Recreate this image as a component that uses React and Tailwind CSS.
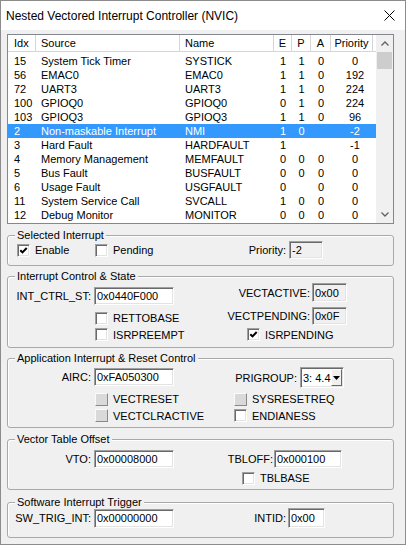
import React from 'react';

const rows = [
  ['15', 'System Tick Timer', 'SYSTICK', '1', '1', '0', '0'],
  ['56', 'EMAC0', 'EMAC0', '1', '1', '0', '192'],
  ['72', 'UART3', 'UART3', '1', '1', '0', '224'],
  ['100', 'GPIOQ0', 'GPIOQ0', '0', '1', '0', '224'],
  ['103', 'GPIOQ3', 'GPIOQ3', '1', '1', '0', '96'],
  ['2', 'Non-maskable Interrupt', 'NMI', '1', '0', '', '-2'],
  ['3', 'Hard Fault', 'HARDFAULT', '1', '', '', '-1'],
  ['4', 'Memory Management', 'MEMFAULT', '0', '0', '0', '0'],
  ['5', 'Bus Fault', 'BUSFAULT', '0', '0', '0', '0'],
  ['6', 'Usage Fault', 'USGFAULT', '0', '', '0', '0'],
  ['11', 'System Service Call', 'SVCALL', '1', '0', '0', '0'],
  ['12', 'Debug Monitor', 'MONITOR', '0', '0', '0', '0'],
];

// column widths + alignment, same for header and rows
const cols = [
  { label: 'Idx', cls: 'w-[28px] pl-[6px]' },
  { label: 'Source', cls: 'w-[144px] pl-[5px]' },
  { label: 'Name', cls: 'w-[94px] pl-[5px]' },
  { label: 'E', cls: 'w-[18px] text-center' },
  { label: 'P', cls: 'w-[19px] text-center' },
  { label: 'A', cls: 'w-[20px] text-center' },
  { label: 'Priority', cls: 'w-[42px] text-center' },
];

const sunken =
  'border border-t-[#a0a0a0] border-l-[#a0a0a0] border-b-white border-r-white shadow-[inset_1px_1px_0_#696969,inset_-1px_-1px_0_#e3e3e3]';

function Box({ checked, disabled }) {
  if (disabled) {
    return (
      <span className="w-[13px] h-[13px] shrink-0 bg-[#d9d9d9] border border-t-[#fafafa] border-l-[#fafafa] border-b-[#8a8a8a] border-r-[#8a8a8a]" />
    );
  }
  return (
    <span className={`w-[13px] h-[13px] shrink-0 flex items-center justify-center bg-white ${sunken}`}>
      {checked && (
        <svg width="9" height="9" viewBox="0 0 9 9">
          <path d="M1.3 4.2 L3.5 6.4 L7.7 2" fill="none" stroke="#000" strokeWidth="2" />
        </svg>
      )}
    </span>
  );
}

function Check({ label, checked, disabled, className = '' }) {
  return (
    <div className={`flex items-center ${className}`}>
      <Box checked={checked} disabled={disabled} />
      <span className="ml-[5px] whitespace-nowrap">{label}</span>
    </div>
  );
}

function Edit({ value, w, h = 'h-[18px]', ro }) {
  return (
    <div className={`${w} ${h} ${ro ? 'bg-[#f0f0f0]' : 'bg-white'} flex items-center pl-[2px] whitespace-nowrap ${sunken}`}>
      {value}
    </div>
  );
}

function Group({ title, className = '', children }) {
  return (
    <fieldset className={`border border-[#a9a9a9] rounded-[3px] shadow-[inset_1px_1px_0_#fff] ${className}`}>
      <legend className="ml-[7px] px-[2px] leading-[12px] bg-[#f0f0f0]">{title}</legend>
      {children}
    </fieldset>
  );
}

function Chevron({ down }) {
  return (
    <svg width="8" height="5" viewBox="0 0 8 5">
      <polyline
        points={down ? '0.5,0.5 4,4 7.5,0.5' : '0.5,4.5 4,1 7.5,4.5'}
        fill="none"
        stroke="#606060"
        strokeWidth="1.3"
      />
    </svg>
  );
}

function List() {
  return (
    <div className="mt-[4px] h-[190px] border border-[#828790] bg-white flex">
      <div className="flex-1 flex flex-col">
        <div className="h-[17px] flex border-b border-[#d5d5d5]">
          {cols.map((c) => (
            <div key={c.label} className={`${c.cls} h-full leading-[16px] border-r border-[#d5d5d5]`}>
              {c.label}
            </div>
          ))}
        </div>
        <div className="pt-[2px]">
          {rows.map((r) => {
            const sel = r[0] === '2';
            return (
              <div key={r[0]} className={`h-[14px] flex leading-[14px] ${sel ? 'bg-[#3399ff] text-white' : ''}`}>
                {r.map((v, i) => (
                  <div key={i} className={`${cols[i].cls} whitespace-nowrap overflow-hidden ${i === 6 ? 'pl-[6px]' : ''}`}>
                    {v}
                  </div>
                ))}
              </div>
            );
          })}
        </div>
      </div>
      <div className="w-[17px] bg-[#f0f0f0] flex flex-col">
        <div className="h-[17px] flex items-center justify-center">
          <Chevron />
        </div>
        <div className="mx-[1px] h-[17px] bg-[#cdcdcd]" />
        <div className="flex-1" />
        <div className="h-[17px] flex items-center justify-center">
          <Chevron down />
        </div>
      </div>
    </div>
  );
}

export default function App() {
  return (
    <div className="w-[406px] h-[545px] border border-[#8c8c8c] bg-[#f0f0f0] text-black text-[11px] leading-[14px] font-['Liberation_Sans',Arial,sans-serif] overflow-hidden">
      <div className="h-[29px] bg-white flex items-center justify-between pl-[5px] pr-[10px]">
        <span className="text-[12px]">Nested Vectored Interrupt Controller (NVIC)</span>
        <svg width="11" height="11" viewBox="0 0 11 11">
          <path d="M0.5 0.5 L10.5 10.5 M10.5 0.5 L0.5 10.5" stroke="#000" strokeWidth="1" />
        </svg>
      </div>

      <div className="pl-[6px] pr-[11px]">
        <List />

        <Group title="Selected Interrupt" className="mt-[5px] pb-[6px]">
          <div className="flex items-center h-[18px] pl-[9px]">
            <Check checked label="Enable" className="w-[78px]" />
            <Check label="Pending" className="w-[120px]" />
            <span className="w-[74px] text-right pr-[3px]">Priority:</span>
            <Edit value="-2" w="w-[34px]" ro />
          </div>
        </Group>

        <Group title="Interrupt Control & State" className="mt-[4px] pb-[4px]">
          <div className="flex">
            <div className="w-[192px] flex flex-col">
              <div className="flex items-center mt-[5px] h-[18px]">
                <span className="w-[86px] text-right pr-[3px]">INT_CTRL_ST:</span>
                <Edit value="0x0440F000" w="w-[80px]" />
              </div>
              <Check label="RETTOBASE" className="ml-[87px] mt-[5px] h-[16px]" />
              <Check label="ISRPREEMPT" className="ml-[87px] h-[17px]" />
            </div>
            <div className="flex-1 flex flex-col">
              <div className="flex items-center mt-[1px] h-[19px]">
                <span className="w-[112px] text-right pr-[2px]">VECTACTIVE:</span>
                <Edit value="0x00" w="w-[35px]" h="h-[19px]" ro />
              </div>
              <div className="flex items-center mt-[5px] h-[18px]">
                <span className="w-[112px] text-right pr-[2px]">VECTPENDING:</span>
                <Edit value="0x0F" w="w-[35px]" ro />
              </div>
              <Check checked label="ISRPENDING" className="ml-[47px] mt-[1px] h-[17px]" />
            </div>
          </div>
        </Group>

        <Group title="Application Interrupt & Reset Control" className="mt-[4px] pb-[3px]">
          <div className="flex">
            <div className="w-[192px] flex flex-col">
              <div className="flex items-center mt-[4px] h-[18px]">
                <span className="w-[86px] text-right pr-[3px]">AIRC:</span>
                <Edit value="0xFA050300" w="w-[80px]" />
              </div>
              <Check disabled label="VECTRESET" className="ml-[87px] mt-[5px] h-[16px]" />
              <Check disabled label="VECTCLRACTIVE" className="ml-[87px] h-[17px]" />
            </div>
            <div className="flex-1 flex flex-col">
              <div className="flex items-center mt-[3px] h-[21px]">
                <span className="w-[100px] text-right pr-[3px]">PRIGROUP:</span>
                <div className={`w-[44px] h-[21px] bg-white flex items-center ${sunken}`}>
                  <span className="flex-1 pl-[2px] whitespace-nowrap">3: 4.4</span>
                  <span className="w-[15px] h-[17px] mr-[1px] bg-[#f0f0f0] flex items-center justify-center border border-t-white border-l-white border-b-[#696969] border-r-[#696969]">
                    <svg width="7" height="4" viewBox="0 0 7 4">
                      <path d="M0 0 H7 L3.5 4 Z" fill="#000" />
                    </svg>
                  </span>
                </div>
              </div>
              <Check disabled label="SYSRESETREQ" className="ml-[34px] mt-[3px] h-[16px]" />
              <Check label="ENDIANESS" className="ml-[34px] h-[17px]" />
            </div>
          </div>
        </Group>

        <Group title="Vector Table Offset" className="mt-[5px] pb-[3px]">
          <div className="flex">
            <div className="w-[192px] flex flex-col">
              <div className="flex items-center mt-[5px] h-[18px]">
                <span className="w-[86px] text-right pr-[3px]">VTO:</span>
                <Edit value="0x00008000" w="w-[80px]" />
              </div>
            </div>
            <div className="flex-1 flex flex-col">
              <div className="flex items-center mt-[5px] h-[18px]">
                <span className="w-[74px] text-right pr-[1px]">TBLOFF:</span>
                <Edit value="0x000100" w="w-[68px]" />
              </div>
              <Check label="TBLBASE" className="ml-[42px] mt-[2px] h-[16px]" />
            </div>
          </div>
        </Group>

        <Group title="Software Interrupt Trigger" className="mt-[6px] pb-[9px]">
          <div className="flex">
            <div className="w-[192px] flex items-center h-[20px]">
              <span className="w-[86px] text-right pr-[3px]">SW_TRIG_INT:</span>
              <Edit value="0x00000000" w="w-[80px]" h="h-[19px]" />
            </div>
            <div className="flex-1 flex items-center h-[20px]">
              <span className="w-[88px] text-right pr-[2px]">INTID:</span>
              <Edit value="0x00" w="w-[37px]" h="h-[20px]" />
            </div>
          </div>
        </Group>
      </div>
    </div>
  );
}
